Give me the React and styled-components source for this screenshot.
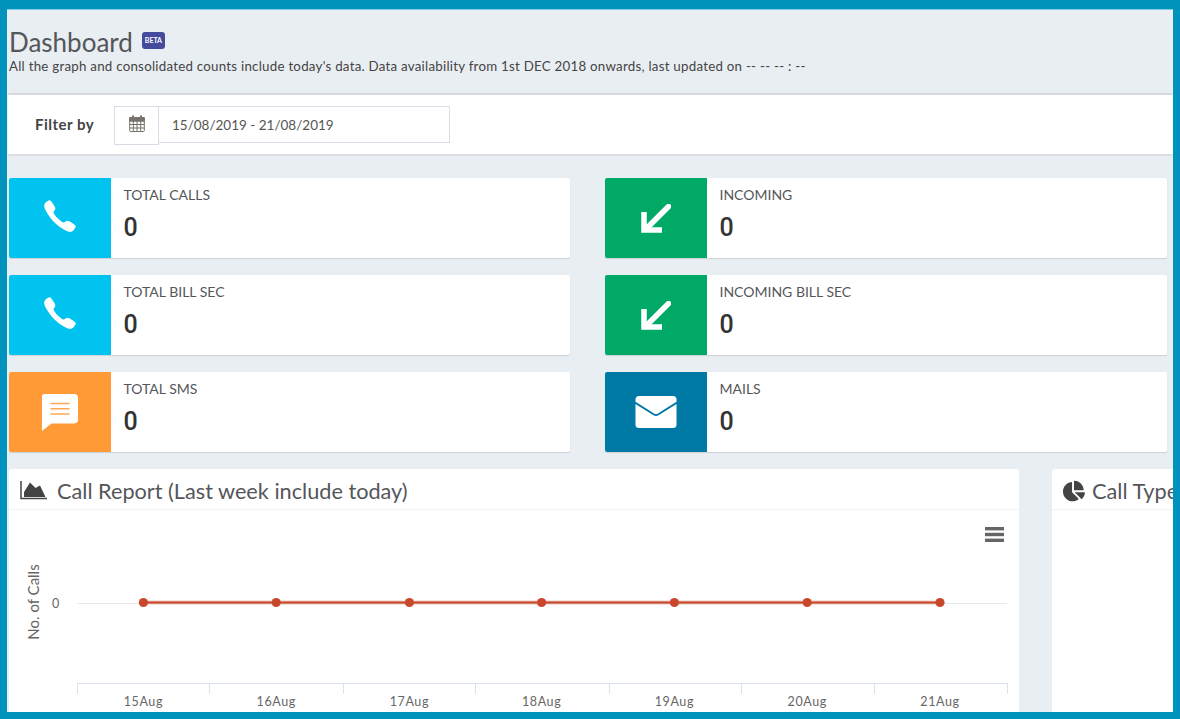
import React from 'react'
import styled, { createGlobalStyle } from 'styled-components'
import { FaChartPie } from 'react-icons/fa'
import { IoIosCall } from 'react-icons/io'

const GlobalStyle = createGlobalStyle`
  html, body { margin: 0; padding: 0; height: 100%; overflow: hidden; }
  body { background: #0093bd; font-family: "Lato", "Noto Sans", sans-serif; }
  * { box-sizing: border-box; }
`

const leftStats = [
  { label: 'TOTAL CALLS', color: '#00c3f0', icon: 'call' },
  { label: 'TOTAL BILL SEC', color: '#00c3f0', icon: 'call' },
  { label: 'TOTAL SMS', color: '#ff9a36', icon: 'sms' },
]
const rightStats = [
  { label: 'INCOMING', color: '#00a965', icon: 'arrow' },
  { label: 'INCOMING BILL SEC', color: '#00a965', icon: 'arrow' },
  { label: 'MAILS', color: '#0079a5', icon: 'mail' },
]
const days = ['15Aug', '16Aug', '17Aug', '18Aug', '19Aug', '20Aug', '21Aug']
const pointX = [134.4, 267.2, 400.4, 532.6, 665.4, 798.2, 931]
const tickX = [68, 200, 334, 466, 600, 732, 865, 998]

const ArrowIcon = () => (
  <svg width="30" height="29" viewBox="0 0 30 29" fill="none" stroke="#fff" strokeWidth="5.5">
    <path d="M27.5 2.5 L6 24" strokeLinecap="round" />
    <path d="M3 8 V26 H21" />
  </svg>
)

const SmsIcon = ({ color }) => (
  <svg width="38" height="38" viewBox="0 0 40 40">
    <path d="M4 1 H35 Q39 1 39 5 V28 Q39 32 35 32 H11 L1 40 V4 Q1 1 4 1 Z" fill="#fff" />
    <path d="M10 11 H30 M10 16.5 H30 M10 22 H30" stroke={color} strokeWidth="1.6" opacity="0.85" />
  </svg>
)

const MailIcon = ({ color }) => (
  <svg width="42" height="32" viewBox="0 0 42 32">
    <rect x="0.5" y="0" width="41" height="32" rx="3.5" fill="#fff" />
    <path d="M0 6.5 L19 18.5 Q21 19.7 23 18.5 L42 6.5" fill="none" stroke={color} strokeWidth="2" />
  </svg>
)

const CalendarIcon = () => (
  <svg width="16" height="17" viewBox="0 0 16 17" fill="none" stroke="#77736c">
    <rect x="0.7" y="2.5" width="14.6" height="14" rx="1" />
    <path d="M0.7 6 H15.3 M0.7 9.5 H15.3 M0.7 13 H15.3 M4.3 6 V16.5 M8 6 V16.5 M11.7 6 V16.5" />
    <path d="M0.7 2.5 H15.3 V6 H0.7 Z" fill="#77736c" />
    <path d="M4 0.5 V4 M12 0.5 V4" strokeWidth="2" />
  </svg>
)

const AreaIcon = () => (
  <svg width="27" height="19" viewBox="0 0 27 19">
    <path d="M1 0 V17.5 H27" fill="none" stroke="#444" strokeWidth="1.5" />
    <path d="M4 16 V11 L10 1.5 L15.5 7 L20 4.5 L25.5 16 Z" fill="#444" />
  </svg>
)

const StatIcon = ({ type, color }) => {
  if (type === 'call') return <IoIosCall size={42} color="#fff" />
  if (type === 'arrow') return <ArrowIcon />
  if (type === 'mail') return <MailIcon color={color} />
  return <SmsIcon color={color} />
}

const StatCard = ({ stat }) => (
  <Card>
    <IconBox $color={stat.color} $lift={stat.icon === 'call'}>
      <StatIcon type={stat.icon} color={stat.color} />
    </IconBox>
    <CardBody>
      <CardLabel>{stat.label}</CardLabel>
      <CardValue>0</CardValue>
    </CardBody>
  </Card>
)

const LineChart = () => (
  <ChartSvg viewBox="0 0 1009 201" width="1009" height="201">
    <line x1="68" x2="998" y1="93.5" y2="93.5" stroke="#e6e9ee" />
    <line x1="134" x2="931" y1="92.5" y2="92.5" stroke="#c9482c" strokeWidth="4" opacity="0.3" />
    <line x1="134" x2="931" y1="92.5" y2="92.5" stroke="#c9482c" strokeWidth="2" />
    {pointX.map(x => <circle key={x} cx={x} cy="92.5" r="4.6" fill="#c9482c" />)}
    <line x1="68" x2="998" y1="173.5" y2="173.5" stroke="#d9e2ee" />
    {tickX.map(x => <line key={x} x1={x + 0.5} x2={x + 0.5} y1="173" y2="184" stroke="#d9e2ee" />)}
    {days.map((d, i) => (
      <AxisText key={d} x={pointX[i]} y="196" textAnchor="middle">{d}</AxisText>
    ))}
    <AxisText x="47" y="98" textAnchor="middle">0</AxisText>
    <YTitle transform="translate(30 92) rotate(-90)" textAnchor="middle">No. of Calls</YTitle>
    <rect x="976" y="17" width="19" height="3.4" fill="#666" />
    <rect x="976" y="22.8" width="19" height="3.4" fill="#666" />
    <rect x="976" y="28.6" width="19" height="3.4" fill="#666" />
  </ChartSvg>
)

const App = () => (
  <Frame>
    <GlobalStyle />
    <Main>
      <PageHead>
        <TitleRow>
          <Title>Dashboard</Title>
          <Beta>BETA</Beta>
        </TitleRow>
        <SubText>All the graph and consolidated counts include today's data. Data availability from 1st DEC 2018 onwards, last updated on -- -- -- : --</SubText>
      </PageHead>
      <FilterBar>
        <FilterLabel>Filter by</FilterLabel>
        <CalendarAddon><CalendarIcon /></CalendarAddon>
        <DateField>15/08/2019 - 21/08/2019</DateField>
      </FilterBar>
      <StatGrid>
        <StatColumn $width={561}>{leftStats.map(s => <StatCard key={s.label} stat={s} />)}</StatColumn>
        <StatColumn $width={562}>{rightStats.map(s => <StatCard key={s.label} stat={s} />)}</StatColumn>
      </StatGrid>
      <PanelRow>
        <ReportPanel>
          <PanelHead>
            <AreaIcon />
            <PanelTitle>Call Report (Last week include today)</PanelTitle>
          </PanelHead>
          <LineChart />
        </ReportPanel>
        <TypePanel>
          <PanelHead $compact>
            <FaChartPie size={22} color="#444" />
            <PanelTitle>Call Type</PanelTitle>
          </PanelHead>
        </TypePanel>
      </PanelRow>
    </Main>
  </Frame>
)

export default App

const Frame = styled.div`
  width: 1180px;
  height: 719px;
  padding: 9px 7px 7px 7px;
  background: #0093bd;
`
const Main = styled.div`
  width: 1166px;
  height: 703px;
  background: #e9eef3;
  border-top: 1px solid #7fcbe2;
  overflow: hidden;
`
const PageHead = styled.div`
  height: 83px;
  padding: 15px 0 0 2px;
`
const TitleRow = styled.div`
  display: flex;
  align-items: flex-start;
  height: 34px;
`
const Title = styled.h1`
  margin: 0;
  font-size: 26px;
  line-height: 34px;
  font-weight: 400;
  color: #55565a;
`
const Beta = styled.span`
  margin: 7px 0 0 9px;
  width: 23px;
  height: 17px;
  border-radius: 3px;
  background: #444a9c;
  color: #fff;
  font-size: 7px;
  font-weight: 700;
  line-height: 17px;
  text-align: center;
`
const SubText = styled.p`
  margin: 0;
  font-size: 13.3px;
  letter-spacing: 0.25px;
  line-height: 15px;
  color: #444;
  white-space: nowrap;
`
const FilterBar = styled.div`
  display: flex;
  align-items: flex-start;
  height: 63px;
  margin-left: 1px;
  padding-top: 11px;
  background: #fff;
  border-top: 2px solid #d6dae0;
  border-bottom: 2px solid #dadde1;
  border-radius: 2px;
`
const FilterLabel = styled.span`
  flex: 0 0 106px;
  padding-left: 27px;
  font-size: 15px;
  letter-spacing: 0.5px;
  line-height: 36px;
  font-weight: 700;
  color: #444;
  white-space: nowrap;
`
const CalendarAddon = styled.span`
  display: flex;
  align-items: flex-start;
  justify-content: center;
  width: 45px;
  height: 39px;
  padding-top: 8px;
  border: 1px solid #d6dde6;
`
const DateField = styled.div`
  width: 291px;
  height: 37px;
  padding-left: 13px;
  border: 1px solid #d6dde6;
  border-left-width: 0;
  font-size: 13.5px;
  line-height: 36px;
  color: #555;
`
const StatGrid = styled.div`
  display: flex;
  gap: 35px;
  margin: 22px 0 0 2px;
`
const StatColumn = styled.div`
  display: flex;
  flex-direction: column;
  gap: 17px;
  width: ${p => p.$width}px;
`
const Card = styled.div`
  display: flex;
  height: 80px;
  background: #fff;
  border-radius: 2px;
  box-shadow: 0 1px 1px rgba(0, 0, 0, 0.12);
  overflow: hidden;
`
const IconBox = styled.div`
  display: flex;
  align-items: center;
  justify-content: center;
  flex: 0 0 102px;
  padding-bottom: ${p => (p.$lift ? '5px' : '0')};
  background: ${p => p.$color};
`
const CardBody = styled.div`
  padding: 7.5px 0 0 12.5px;
`
const CardLabel = styled.div`
  font-size: 14px;
  line-height: 18px;
  color: #55565a;
  white-space: nowrap;
`
const CardValue = styled.div`
  margin-top: 10px;
  font-family: "Roboto", "Noto Sans", sans-serif;
  font-size: 25px;
  line-height: 28px;
  font-weight: 500;
  color: #333;
`
const PanelRow = styled.div`
  display: flex;
  gap: 33px;
  margin: 17px 0 0 2px;
`
const ReportPanel = styled.section`
  flex: 0 0 1010px;
  height: 300px;
  background: #fff;
  border-radius: 3px 3px 0 0;
`
const TypePanel = styled.section`
  flex: 0 0 300px;
  height: 300px;
  background: #fff;
  border-radius: 3px 3px 0 0;
`
const PanelHead = styled.div`
  display: flex;
  align-items: center;
  gap: ${p => (p.$compact ? '7px' : '10px')};
  height: 41px;
  padding: 3px 0 0 11px;
  border-bottom: 1px solid #f2f3f5;
`
const PanelTitle = styled.h2`
  margin: 0;
  font-size: 21.7px;
  font-weight: 400;
  color: #55565a;
  white-space: nowrap;
`
const ChartSvg = styled.svg`
  display: block;
`
const AxisText = styled.text`
  font-family: "Lato", sans-serif;
  font-size: 12.5px;
  letter-spacing: 0.6px;
  fill: #666;
`
const YTitle = styled.text`
  font-family: "Lato", sans-serif;
  font-size: 15px;
  fill: #666;
`
